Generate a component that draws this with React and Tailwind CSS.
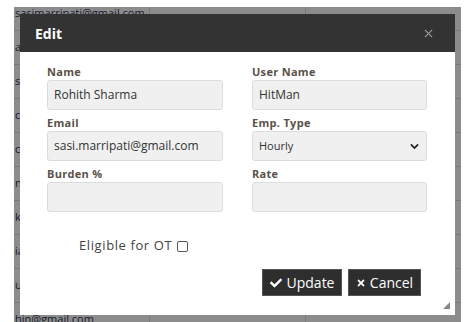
import React from "react";
import { FaCheck, FaTimes } from "react-icons/fa";

const rows = [
  "sasimarripati@gmail.com",
  "anand@gmail.com",
  "sasi@gmail.com",
  "chandra@gmail.com",
  "charan@gmail.com",
  "naveen@gmail.com",
  "kiran@gmail.com",
  "iakshmi@gmail.com",
  "uday@gmail.com",
  "hin@gmail.com",
];

function Field({ label, value, select }) {
  return (
    <div className="flex flex-col">
      <div className="h-[16px] leading-[16px] text-[11px] font-bold text-[#5a5148] tracking-[0.3px]">{label}</div>
      {select ? (
        <div className="h-[30px] rounded-[3px] border border-[#dcdcdc] bg-[#f0f0f0] flex items-center justify-between pl-[6px] pr-[6px] text-[11px] text-[#333]">
          <span>{value}</span>
          <svg width="9" height="7" viewBox="0 0 10 7" className="mr-[1px]">
            <path d="M1 1.2 L5 5.2 L9 1.2" fill="none" stroke="#222" strokeWidth="2" />
          </svg>
        </div>
      ) : (
        <div className="h-[30px] rounded-[3px] border border-[#dcdcdc] bg-[#f0f0f0] flex items-center pl-[6px] text-[12px] text-[#333]">
          {value}
        </div>
      )}
    </div>
  );
}

export default function App() {
  return (
    <div className="w-[468px] h-[322px] bg-white pl-[14px] pt-[7px] overflow-hidden" style={{ fontFamily: "'Open Sans', 'Noto Sans', sans-serif" }}>
      <div className="relative w-[447px] h-[315px] overflow-hidden">
        <div className="mt-[-10px] flex flex-col">
          {rows.map((r, i) => (
            <div key={i} className="h-[34px] flex items-center border-b border-[#dddddd] text-[11px] text-[#2b3550]">
              <div className="w-[136px] pl-[1px] border-r border-[#dddddd] h-full flex items-center whitespace-nowrap">{r}</div>
              <div className="w-[156px] border-r border-[#dddddd] h-full" />
              <div className="flex-1" />
            </div>
          ))}
        </div>
        <div className="absolute inset-0 bg-black/45" />
        <div className="absolute left-[6px] top-[7px] w-[435px] h-[301px] bg-white flex flex-col">
          <div className="h-[38px] bg-[#333333] flex items-center justify-between pl-[15px] pr-[22px]">
            <span className="text-white font-bold text-[14px]">Edit</span>
            <svg width="9" height="9" viewBox="0 0 10 10">
              <path d="M1 1 L9 9 M9 1 L1 9" stroke="#9a9a9a" strokeWidth="1.3" />
            </svg>
          </div>
          <div className="flex-1 relative pt-[12px] pl-[27px] pr-[28px]">
            <div className="grid grid-cols-[176px_175px] gap-x-[29px] gap-y-[5px]">
              <Field label="Name" value="Rohith Sharma" />
              <Field label="User Name" value="HitMan" />
              <Field label="Email" value="sasi.marripati@gmail.com" />
              <Field label="Emp. Type" value="Hourly" select />
              <Field label="Burden %" value="" />
              <Field label="Rate" value="" />
            </div>
            <div className="mt-[27px] pl-[32px] flex items-center gap-[5px] h-[14px]">
              <span className="text-[13px] text-[#444] tracking-[0.6px]">Eligible for OT</span>
              <span className="w-[11px] h-[11px] border border-[#555] rounded-[2px] bg-white" />
            </div>
            <div className="mt-[16px] pr-[6px] flex justify-end gap-[6px]">
              <button className="h-[27px] w-[80px] bg-[#2e2e2e] border border-[#555] text-white text-[14px] flex items-center justify-center gap-[5px]">
                <FaCheck className="w-[12px] h-[12px]" />
                <span>Update</span>
              </button>
              <button className="h-[27px] w-[73px] bg-[#2e2e2e] border border-[#555] text-white text-[14px] flex items-center justify-center gap-[4px]">
                <FaTimes className="w-[10px] h-[10px]" />
                <span>Cancel</span>
              </button>
            </div>
            <svg width="7" height="7" viewBox="0 0 7 7" className="absolute right-[5px] bottom-[6px]">
              <path d="M7 0 L7 7 L0 7 Z" fill="#888" />
            </svg>
          </div>
        </div>
      </div>
    </div>
  );
}
